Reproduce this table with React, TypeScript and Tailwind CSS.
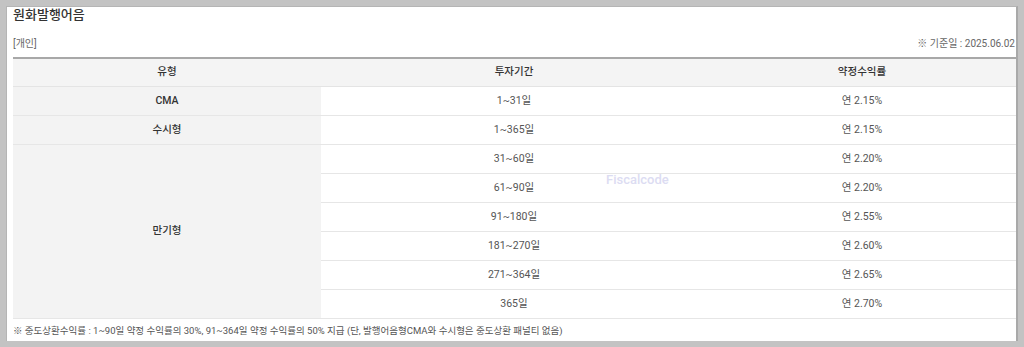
const rows: { type?: string; span?: number; period: string; rate: string }[] = [
  { type: "CMA", span: 1, period: "1~31일", rate: "연 2.15%" },
  { type: "수시형", span: 1, period: "1~365일", rate: "연 2.15%" },
  { type: "만기형", span: 6, period: "31~60일", rate: "연 2.20%" },
  { period: "61~90일", rate: "연 2.20%" },
  { period: "91~180일", rate: "연 2.55%" },
  { period: "181~270일", rate: "연 2.60%" },
  { period: "271~364일", rate: "연 2.65%" },
  { period: "365일", rate: "연 2.70%" },
];

const App = () => {
  return (
    <div
      className="w-[1024px] h-[347px] bg-[#c3c3c3] pt-[6px] pl-[6px] pr-[6px] pb-[6px]"
      style={{ fontFamily: '"Roboto", "Noto Sans CJK KR", sans-serif' }}
    >
      <div className="relative h-[335px] bg-white border-l border-t border-[#b5b5b5] border-r-2 border-r-[#a9a9a9] overflow-hidden pl-[6px]">
        <h1 className="mt-[0px] text-[13px] leading-[16px] text-[#333] font-medium">
          원화발행어음
        </h1>
        <div className="mt-[14px] flex justify-between items-end text-[10px] leading-[13px] text-[#666] pr-[1px]">
          <span>[개인]</span>
          <span>※ 기준일 : 2025.06.02</span>
        </div>
        <table className="mt-[7px] w-[1004px] border-collapse border-t-2 border-[#a8a8a8] text-[10.5px] text-[#555]">
          <colgroup>
            <col className="w-[308px]" />
            <col className="w-[386px]" />
            <col className="w-[310px]" />
          </colgroup>
          <thead>
            <tr className="h-[28px] bg-[#f4f4f4] text-[#333] border-b border-[#e4e4e4]">
              <th className="font-medium">유형</th>
              <th className="font-medium">투자기간</th>
              <th className="font-medium">약정수익률</th>
            </tr>
          </thead>
          <tbody>
            {rows.map((r, i) => (
              <tr key={i} className="h-[29px] border-b border-[#e6e6e6]">
                {r.type && (
                  <td
                    rowSpan={r.span}
                    className="bg-[#f3f3f3] text-center text-[#333] font-medium border-b border-[#e6e6e6]"
                  >
                    {r.type}
                  </td>
                )}
                <td className="text-center">{r.period}</td>
                <td className="text-center">{r.rate}</td>
              </tr>
            ))}
          </tbody>
        </table>
        <p className="mt-[6px] text-[9.5px] leading-[12px] text-[#555]">
          ※ 중도상환수익률 : 1~90일 약정 수익률의 30%, 91~364일 약정 수익률의 50% 지급 (단, 발행어음형CMA와 수시형은 중도상환 패널티 없음)
        </p>
        <div className="absolute left-[599px] top-[163px] text-[13px] font-medium text-[#dcdcf2] pointer-events-none">
          Fiscalcode
        </div>
      </div>
    </div>
  );
};

export default App;
